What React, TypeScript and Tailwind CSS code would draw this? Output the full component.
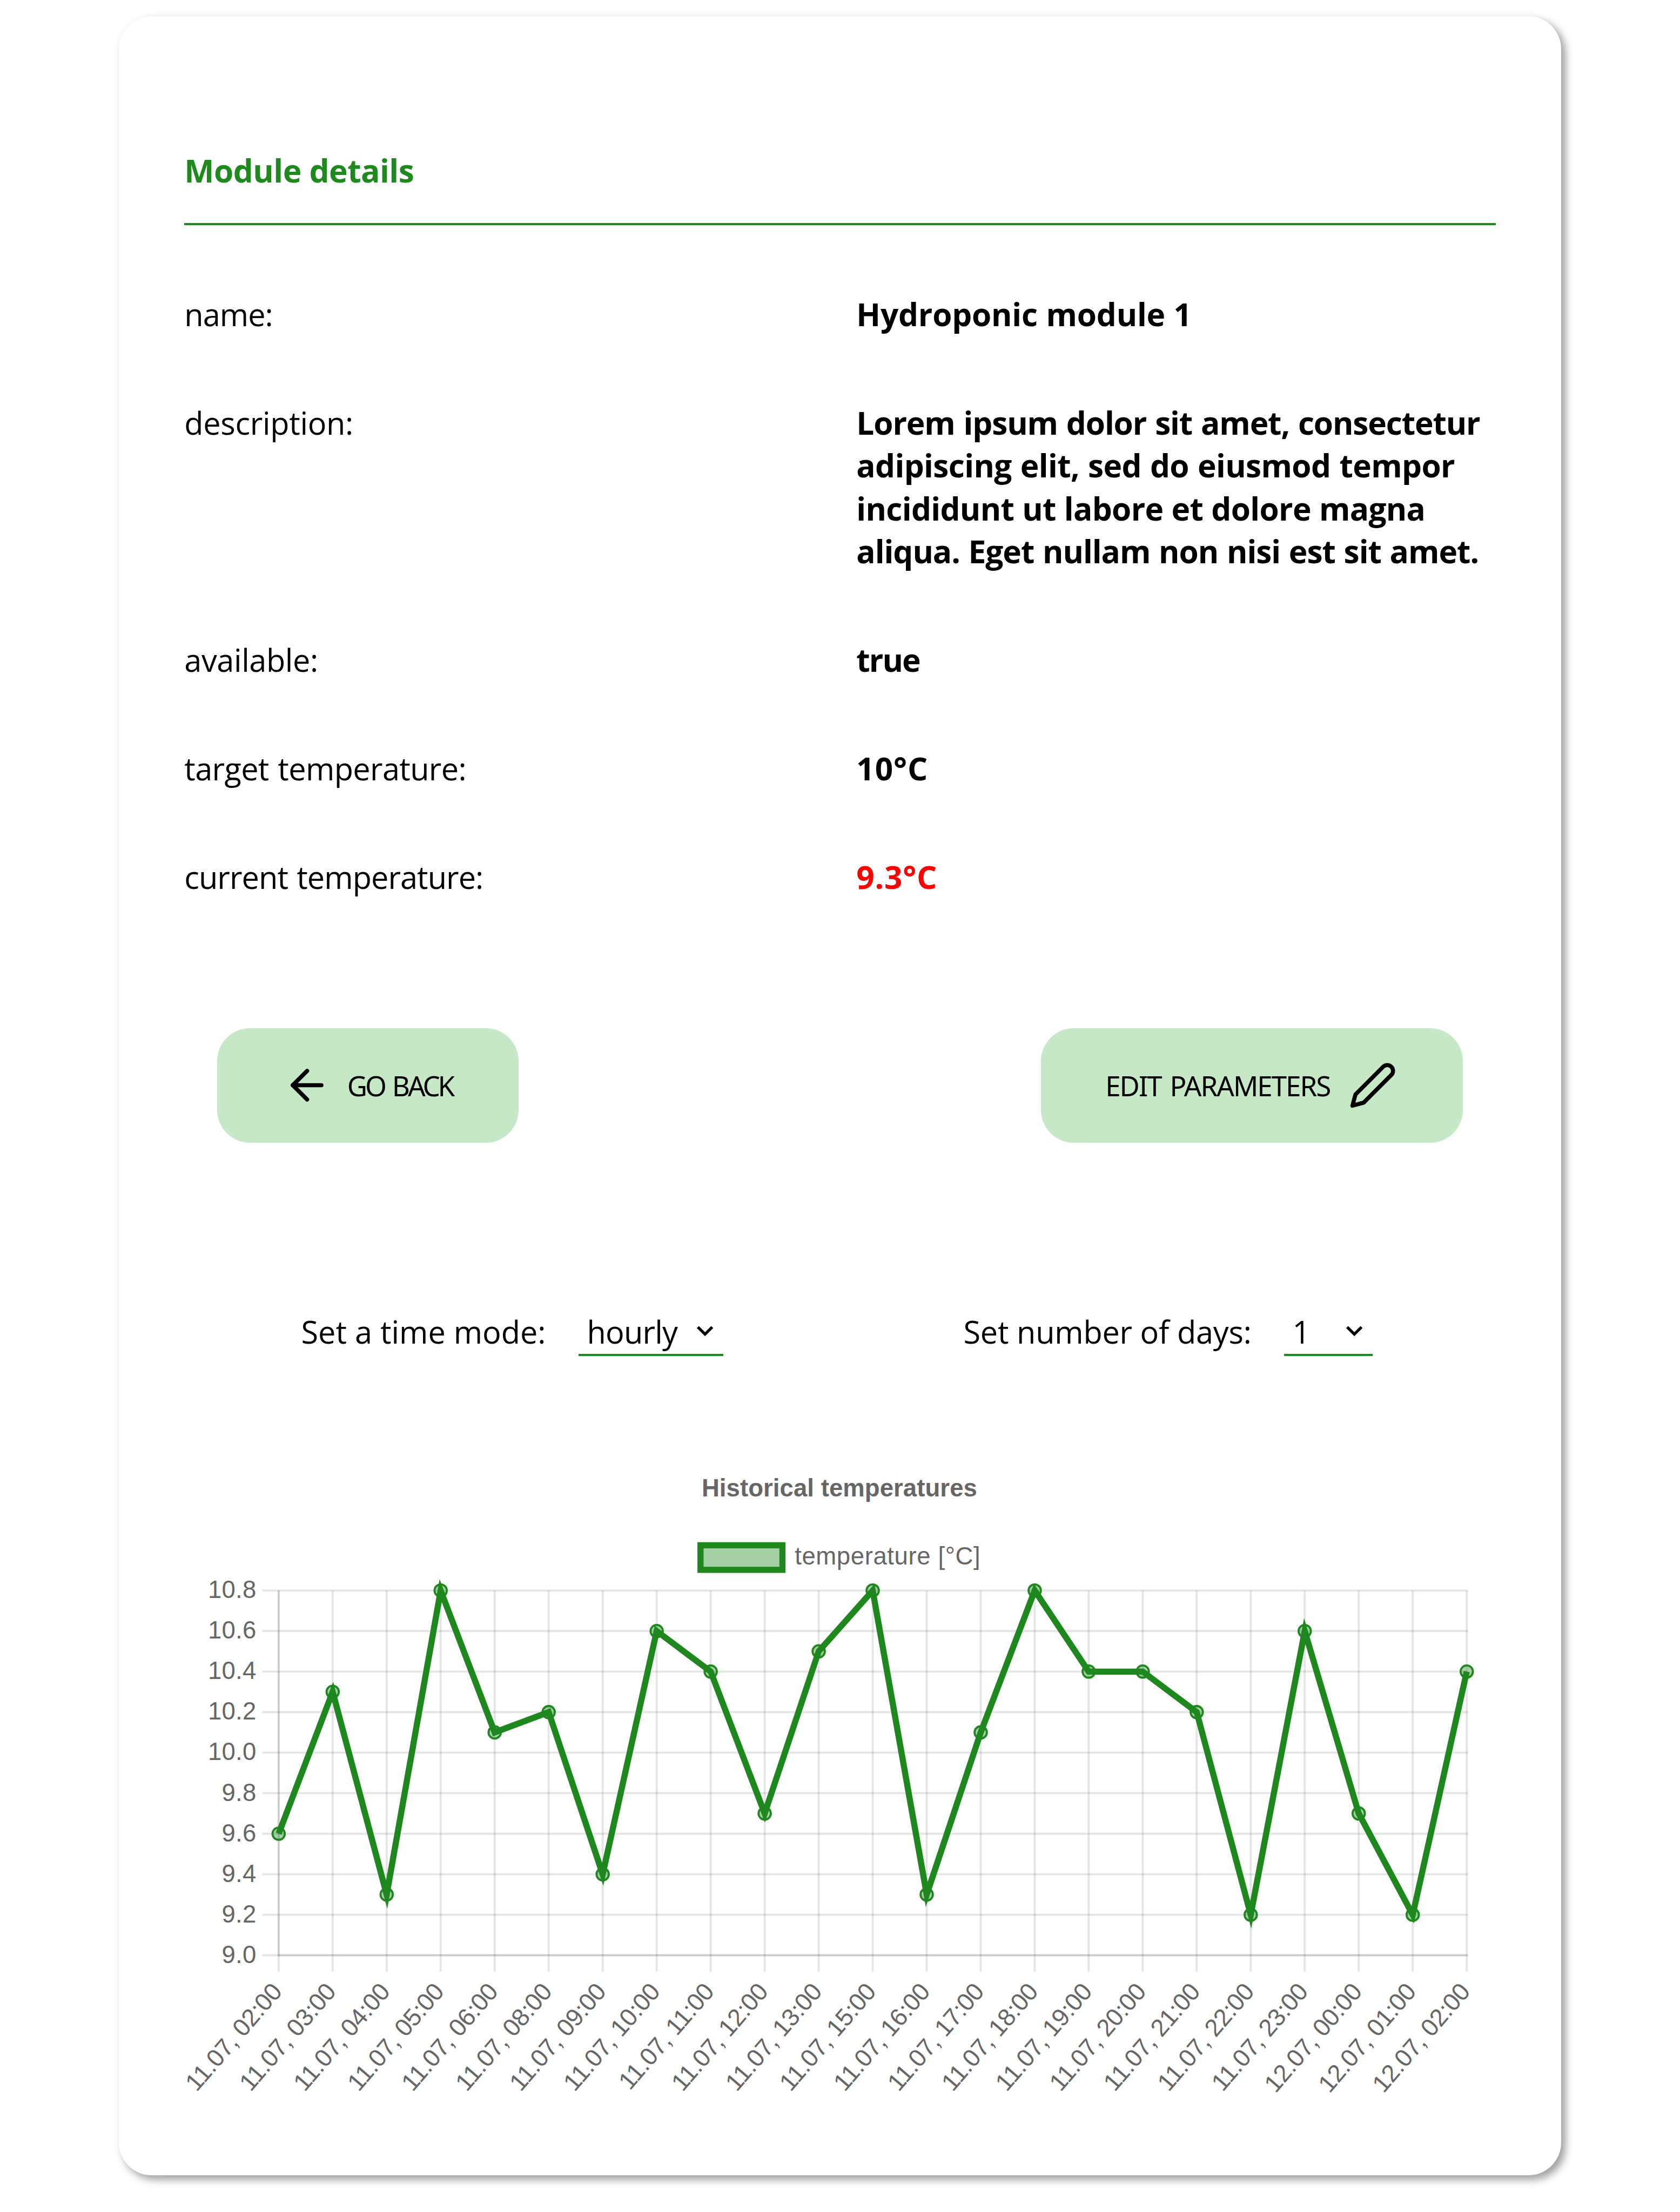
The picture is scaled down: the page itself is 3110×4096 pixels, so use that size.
import React from 'react';
import { ArrowLeft } from 'lucide-react';

const GREEN = '#1e871e';

const details = [
  { label: 'name:', spacing: 'tracking-[-0.25px]', lines: [{ text: 'Hydroponic module 1', spacing: 'tracking-[-0.06px] [word-spacing:0.2px]' }] },
  {
    label: 'description:',
    spacing: 'tracking-[-0.08px]',
    lines: [
      { text: 'Lorem ipsum dolor sit amet, consectetur', spacing: 'tracking-[-0.3px] [word-spacing:0.5px]' },
      { text: 'adipiscing elit, sed do eiusmod tempor', spacing: 'tracking-[-0.17px] [word-spacing:0.4px]' },
      { text: 'incididunt ut labore et dolore magna', spacing: 'tracking-[-0.18px] [word-spacing:0.15px]' },
      { text: 'aliqua. Eget nullam non nisi est sit amet.', spacing: 'tracking-[-0.27px] [word-spacing:0.4px]' },
    ],
  },
  { label: 'available:', spacing: 'tracking-[-0.1px]', lines: [{ text: 'true', spacing: 'tracking-[-0.5px]' }] },
  { label: 'target temperature:', spacing: 'tracking-[-0.17px] [word-spacing:0.6px]', lines: [{ text: '10°C', spacing: 'tracking-[0.24px]' }] },
  { label: 'current temperature:', spacing: 'tracking-[-0.25px] [word-spacing:0.6px]', alert: true, lines: [{ text: '9.3°C', spacing: 'tracking-[0.2px]' }] },
];

const readings: [string, number][] = [
  ['11.07, 02:00', 9.6], ['11.07, 03:00', 10.3], ['11.07, 04:00', 9.3], ['11.07, 05:00', 10.8],
  ['11.07, 06:00', 10.1], ['11.07, 08:00', 10.2], ['11.07, 09:00', 9.4], ['11.07, 10:00', 10.6],
  ['11.07, 11:00', 10.4], ['11.07, 12:00', 9.7], ['11.07, 13:00', 10.5], ['11.07, 15:00', 10.8],
  ['11.07, 16:00', 9.3], ['11.07, 17:00', 10.1], ['11.07, 18:00', 10.8], ['11.07, 19:00', 10.4],
  ['11.07, 20:00', 10.4], ['11.07, 21:00', 10.2], ['11.07, 22:00', 9.2], ['11.07, 23:00', 10.6],
  ['12.07, 00:00', 9.7], ['12.07, 01:00', 9.2], ['12.07, 02:00', 10.4],
];

const ticks = ['10.8', '10.6', '10.4', '10.2', '10.0', '9.8', '9.6', '9.4', '9.2', '9.0'];

const LEFT = 46.1;
const RIGHT = 626;
const TOP = 66.5;
const BOTTOM = 244.6;

const px = (i: number) => LEFT + (i * (RIGHT - LEFT)) / (readings.length - 1);
const py = (v: number) => BOTTOM - ((v - 9) / 1.8) * (BOTTOM - TOP);

function TemperatureChart() {
  const points = readings.map(([, v], i) => `${px(i)},${py(v)}`).join(' ');
  return (
    <svg viewBox="0 0 640 320" className="mt-12 block h-[320px] w-[640px] overflow-visible font-['Liberation_Sans',Arial,sans-serif]">
      <text x="319.8" y="20.6" fontSize="12" fontWeight="700" fill="#666" textAnchor="middle" letterSpacing="0.02">Historical temperatures</text>
      <rect x="252" y="44.4" width="40" height="12" fill="#a5cfa5" stroke={GREEN} strokeWidth="3" />
      <text x="298" y="53.9" fontSize="12" fill="#666" letterSpacing="0.16">temperature [°C]</text>
      <g stroke="#000" strokeOpacity="0.1" strokeWidth="1">
        {ticks.map((t, i) => {
          const y = TOP + (i * (BOTTOM - TOP)) / 9;
          return <line key={t} x1={LEFT - 8} x2={RIGHT + 0.5} y1={y} y2={y} />;
        })}
        {readings.map(([t], i) => (
          <line key={t} x1={px(i)} x2={px(i)} y1={TOP} y2={BOTTOM + 8} />
        ))}
        <line x1={LEFT} x2={LEFT} y1={TOP} y2={BOTTOM + 0.5} />
        <line x1={LEFT} x2={RIGHT + 0.5} y1={BOTTOM} y2={BOTTOM} />
      </g>
      <g fontSize="12" fill="#666" textAnchor="end">
        {ticks.map((t, i) => (
          <text key={t} x="35.2" y={TOP + (i * (BOTTOM - TOP)) / 9 + 3.7} letterSpacing="0.07">{t}</text>
        ))}
        {readings.map(([t], i) => (
          <text key={t} transform={`translate(${px(i) + 2.2} ${BOTTOM + 18.1}) rotate(-49.2)`} letterSpacing="-0.1">{t}</text>
        ))}
      </g>
      <polyline points={points} fill="none" stroke={GREEN} strokeWidth="3" strokeMiterlimit="10" />
      <g fill={GREEN} fillOpacity="0.4" stroke={GREEN} strokeWidth="1">
        {readings.map(([t, v], i) => (
          <circle key={t} cx={px(i)} cy={py(v)} r="3" />
        ))}
      </g>
    </svg>
  );
}

function Caret() {
  return (
    <svg viewBox="0 0 8 6" className="h-[6px] w-[8px] fill-none stroke-black" strokeWidth="1.4">
      <path d="M0.5 0.6 L4 4.1 L7.5 0.6" />
    </svg>
  );
}

export default function App() {
  return (
    <div className="h-[1080px] w-[820px] overflow-hidden bg-white px-[58px] pt-2 font-['Open_Sans','Noto_Sans',sans-serif] text-black [zoom:3.792683]">
      <main className="h-[1054px] w-[704px] rounded-2xl bg-white px-8 pt-[64.8px] shadow-[2px_2px_4px_rgba(0,0,0,0.38)]">
        <h2 className="h-[37.25px] border-b-[1.06px] border-[#1e8a1e] text-[15.44px] leading-[21px] font-bold tracking-[-0.13px] text-[#1e8a1e]">
          Module details
        </h2>

        <dl className="mt-[32.75px] flex flex-col gap-8 leading-[21px]">
          {details.map((row) => (
            <div key={row.label} className="grid grid-cols-2 gap-4">
              <dt className={`text-[15.2px] ${row.spacing}`}>{row.label}</dt>
              <dd className={`text-[15.44px] font-bold whitespace-nowrap ${row.alert ? 'text-[#ff0000]' : ''}`}>
                {row.lines.map((line) => (
                  <span key={line.text} className={`block ${line.spacing}`}>{line.text}</span>
                ))}
              </dd>
            </div>
          ))}
        </dl>

        <div className="mt-[63.2px] flex justify-between px-4 font-['Noto_Sans',sans-serif] text-[13.5px]">
          <button className="flex h-14 w-[147px] items-center rounded-2xl bg-[#c7e8c7] pl-8 whitespace-nowrap">
            <ArrowLeft size={24} strokeWidth={2} className="shrink-0" />
            <span className="ml-[7.5px] tracking-[-1.1px] [word-spacing:1.3px]">GO BACK</span>
          </button>
          <button className="flex h-14 w-[206px] items-center rounded-2xl bg-[#c7e8c7] pl-[31.5px] whitespace-nowrap">
            <span className="w-[118.5px] text-left tracking-[-0.54px] [word-spacing:1.2px]">EDIT PARAMETERS</span>
            <svg viewBox="0 0 24 24" className="size-6 shrink-0 fill-none stroke-black" strokeWidth="2" strokeLinecap="round" strokeLinejoin="round">
              <path d="M17 3a2.828 2.828 0 1 1 4 4L7.5 20.5 2 22l1.5-5.5L17 3z" />
            </svg>
          </button>
        </div>

        <div className="mt-[81.7px] grid grid-cols-2 text-[15.2px] leading-[21px] whitespace-nowrap">
          <div className="flex pl-[57px]">
            <span className="w-[135.4px]">Set a time mode:</span>
            <div className="flex h-[22.3px] w-[70.6px] items-start justify-between border-b-[1.06px] border-[#1e8a1e] pr-[4.75px] pl-[4.1px]">
              <span className="tracking-[-0.21px]">hourly</span>
              <span className="pt-[7.7px]"><Caret /></span>
            </div>
          </div>
          <div className="flex pl-[60.25px]">
            <span className="w-[156.6px] tracking-[-0.06px]">Set number of days:</span>
            <div className="flex h-[22.3px] w-[43.15px] items-start justify-between border-b-[1.06px] border-[#1e8a1e] pr-[5px] pl-[4px]">
              <span>1</span>
              <span className="pt-[7.7px]"><Caret /></span>
            </div>
          </div>
        </div>

        <TemperatureChart />
      </main>
    </div>
  );
}
